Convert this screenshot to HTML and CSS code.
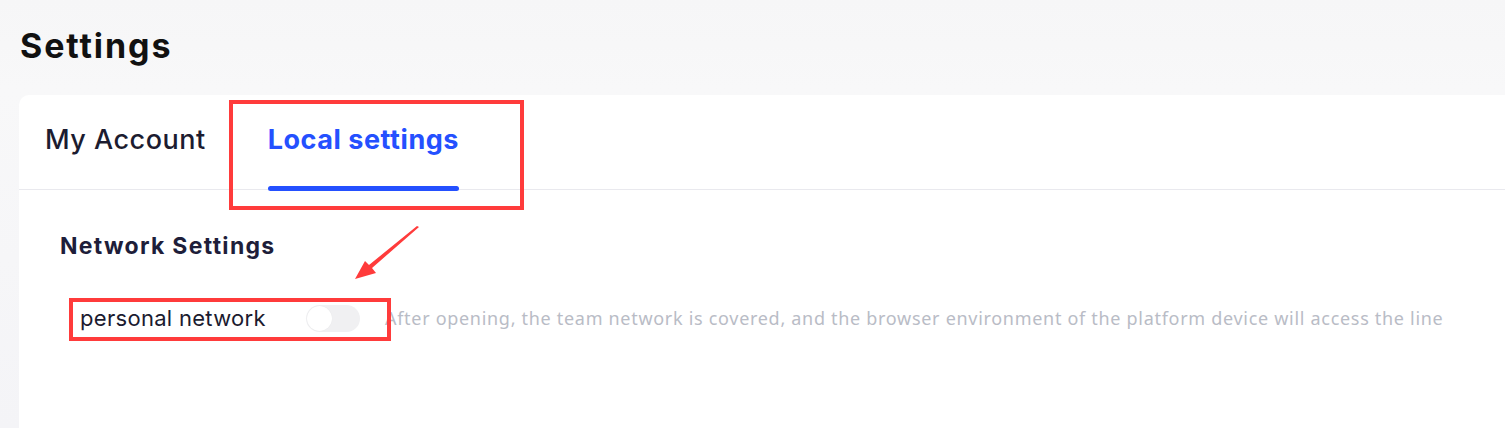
FILE: index.html
```html
<!DOCTYPE html>
<html lang="en">
<head>
    <meta charset="UTF-8">
    <title>Settings</title>
    <link rel="stylesheet" href="styles.css">
</head>
<body>
<div class="page">
    <h1 class="title">Settings</h1>

    <div class="card">
        <div class="tabs">
            <div class="tab">My Account</div>
            <div class="tab active">Local settings</div>
        </div>

        <div class="content">
            <h2 class="section">Network Settings</h2>
            <div class="row">
                <span class="label">personal network</span>
                <span class="switch"><span class="knob"></span></span>
                <span class="hint">After opening, the team network is covered, and the browser environment of the platform device will access the line</span>
            </div>
        </div>
    </div>
</div>

<!-- annotations -->
<div class="mark mark-tab"></div>
<div class="mark mark-row"></div>
<svg class="arrow" width="80" height="64" viewBox="0 0 80 64">
    <path d="M66 1 L19 42 L23 47 L2 53 L12 35 L16 39 L64 0 Z" fill="#ff3b3b"/>
</svg>
</body>
</html>
```

FILE: styles.css
```css
body {
    margin: 0;
    background: linear-gradient(to bottom, #f6f6f7, #f8f8f9 90px, #f4f4f7);
    font-family: 'Inter', 'Noto Sans', sans-serif;
    color: #1b1b2f;
    height: 428px;
    overflow: hidden;
}

.page {
    padding-left: 19px;
}

.title {
    margin: 0;
    height: 95px;
    padding-left: 1px;
    line-height: 92px;
    font-size: 34px;
    font-weight: 700;
    letter-spacing: 1.9px;
    color: #111;
}

.card {
    background: #fff;
    border-radius: 10px 0 0 0;
    height: 333px;
}

.tabs {
    display: flex;
    gap: 62px;
    padding-left: 26px;
    height: 95px;
    border-bottom: 1px solid #e9e9ee;
    box-sizing: border-box;
}

.tab {
    position: relative;
    font-size: 27px;
    font-weight: 500;
    letter-spacing: 0.5px;
    line-height: 90px;
    color: #1c1c30;
}

.tab.active {
    color: #2450ff;
    font-weight: 700;
    letter-spacing: 0.55px;
}

.tab.active::after {
    content: "";
    position: absolute;
    left: 0;
    right: 0;
    bottom: -2px;
    height: 5px;
    border-radius: 3px;
    background: #2450ff;
}

.content {
    padding: 42px 0 0 41px;
}

.section {
    margin: 0;
    font-size: 23px;
    line-height: 28px;
    font-weight: 700;
    letter-spacing: 1.3px;
    color: #1e1e3a;
}

.row {
    display: flex;
    align-items: center;
    height: 30px;
    margin-top: 43px;
    padding-left: 20px;
}

.label {
    font-size: 22px;
    letter-spacing: 0.3px;
    color: #1b1b2f;
    width: 226px;
}

.switch {
    width: 54px;
    height: 27px;
    border-radius: 14px;
    background: #f0f0f2;
    position: relative;
    margin-right: 25px;
}

.knob {
    position: absolute;
    left: 1px;
    top: 1px;
    width: 25px;
    height: 25px;
    border-radius: 50%;
    background: #fff;
    box-shadow: 0 0 1px rgba(0, 0, 0, 0.08);
}

.hint {
    font-family: 'Noto Sans', sans-serif;
    font-size: 18px;
    letter-spacing: 0.7px;
    color: #b9bcc6;
    white-space: nowrap;
}

.mark {
    position: absolute;
    border: 4px solid #ff3b3b;
    box-sizing: border-box;
}

.mark-tab {
    left: 229px;
    top: 100px;
    width: 295px;
    height: 110px;
}

.mark-row {
    left: 69px;
    top: 298px;
    width: 322px;
    height: 43px;
}

.arrow {
    position: absolute;
    left: 353px;
    top: 226px;
}
```
